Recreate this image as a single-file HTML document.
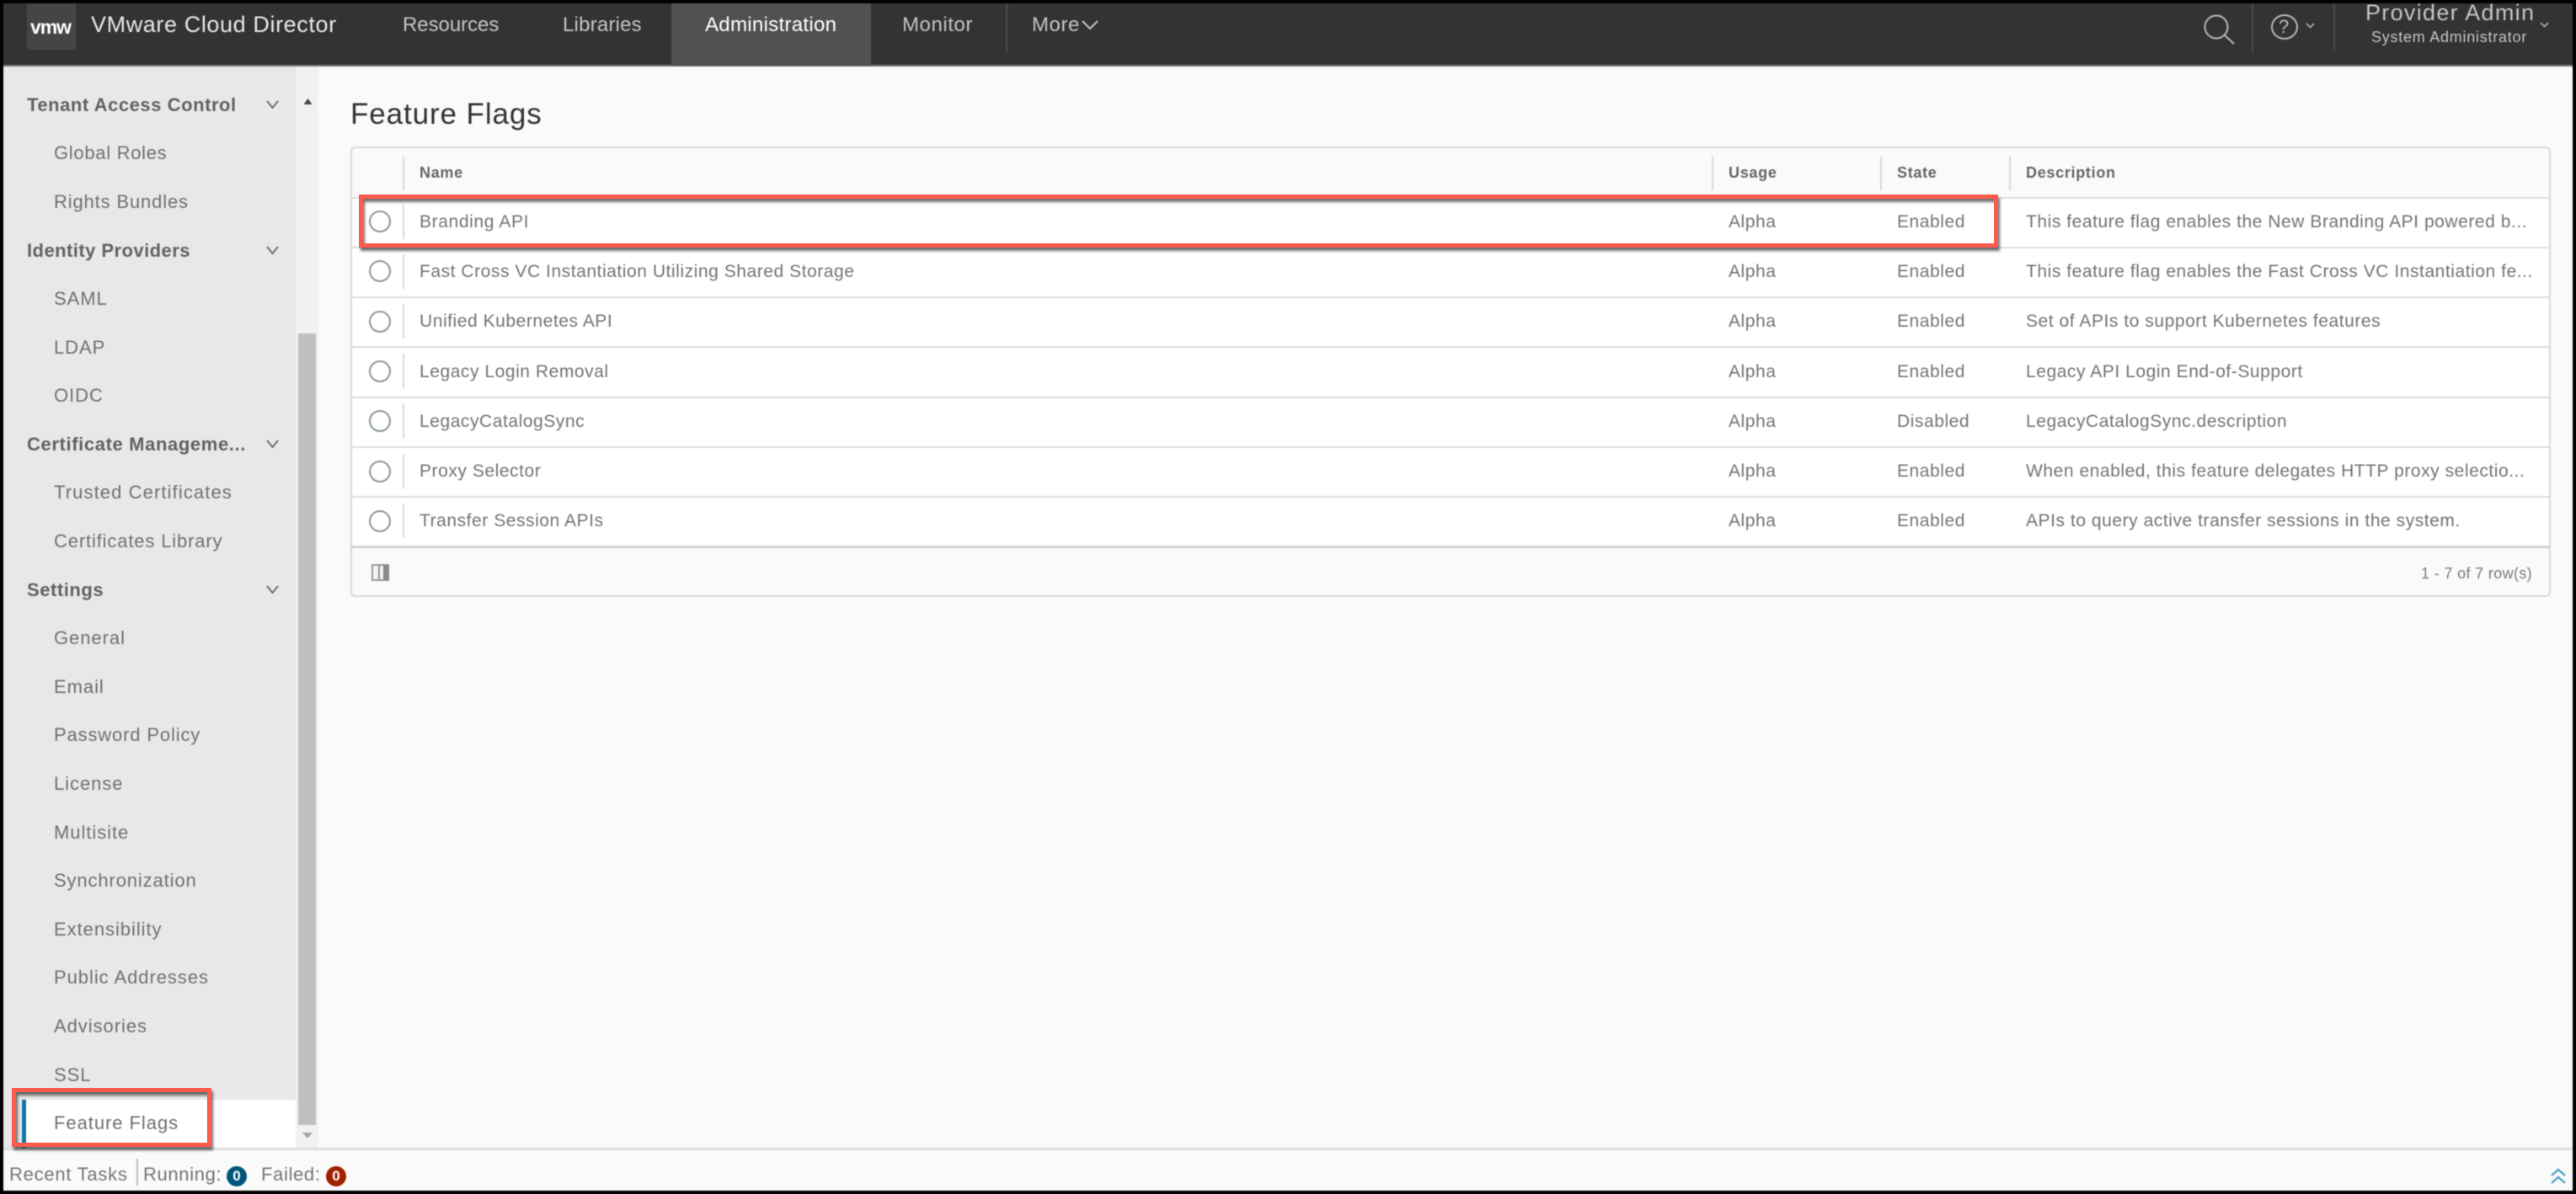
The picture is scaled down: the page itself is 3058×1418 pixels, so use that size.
<!DOCTYPE html>
<html lang="en"><head><meta charset="utf-8"><title>Feature Flags</title>
<style>
html,body{margin:0;padding:0;background:#000;width:3058px;height:1418px;overflow:hidden}
#f{position:absolute;left:4px;top:4px;width:3050px;height:1410px;overflow:hidden;background:#fafafa}
#w{position:absolute;left:0;top:0;width:3058px;height:1418px;font-family:"Liberation Sans",sans-serif;filter:blur(.45px)}
.b{position:absolute}
.t{position:absolute;white-space:nowrap;line-height:40px;height:40px}
.h{color:#c4c4c4;font-size:24px;letter-spacing:.4px}
.s{color:#707070;font-size:22px;letter-spacing:.95px}
.g{color:#626262;font-size:22px;font-weight:bold;letter-spacing:.55px}
.c{color:#747474;font-size:21px;letter-spacing:.55px}
.k{color:#666;font-size:18px;font-weight:bold;letter-spacing:.7px}
.l{position:absolute;background:#dcdcdc;height:2px;left:416px;width:2612px}
.d{position:absolute;background:#d8d8d8;width:2px}
.r{position:absolute;left:438px;width:22px;height:22px;border:2px solid #8b969b;border-radius:50%;background:#fff}
.red{position:absolute;border:5px solid #ff5a4e;box-sizing:border-box;box-shadow:2px 4px 3px rgba(0,0,0,.55),inset 2px 4px 3px rgba(0,0,0,.55)}
svg{position:absolute;overflow:visible}
</style></head><body>
<div id="w">
<div id="f"></div>
<!-- header -->
<div class="b" style="left:4px;top:4px;width:3050px;height:74px;background:#333"></div>
<div class="b" style="left:4px;top:77px;width:3050px;height:2px;background:#777"></div>
<div class="b" style="left:32px;top:4px;width:58px;height:55px;background:#454545;border-radius:0 0 4px 4px"></div>
<div class="t" style="left:36px;top:12px;color:#fff;font-size:23px;font-weight:bold;letter-spacing:-1.1px">vmw</div>
<div class="t" style="left:108px;top:9px;color:#e6e6e6;font-size:27px;letter-spacing:.6px">VMware Cloud Director</div>
<div class="t h" style="left:478px;top:10px;letter-spacing:-.05px">Resources</div>
<div class="t h" style="left:668px;top:10px;letter-spacing:.2px">Libraries</div>
<div class="b" style="left:797px;top:4px;width:237px;height:74px;background:#515151"></div>
<div class="t" style="left:837px;top:10px;color:#fff;font-size:24px;letter-spacing:.3px">Administration</div>
<div class="t h" style="left:1071px;top:10px;letter-spacing:.55px">Monitor</div>
<div class="t h" style="left:1225px;top:10px;letter-spacing:.55px">More</div>
<svg style="left:1283px;top:23px" width="22" height="14" fill="none" stroke="#c4c4c4" stroke-width="2"><path d="M2 2l9 9 9-9"/></svg>
<div class="b" style="left:1194px;top:4px;width:2px;height:58px;background:#4e4e4e"></div>
<svg style="left:2616px;top:17px" width="38" height="36" fill="none" stroke="#b8b8b8" stroke-width="2"><circle cx="15" cy="15" r="13.5"/><path d="M25 25l11 10"/></svg>
<div class="b" style="left:2673px;top:4px;width:2px;height:58px;background:#4a4a4a"></div>
<svg style="left:2696px;top:17px" width="34" height="30" fill="none" stroke="#b8b8b8" stroke-width="2"><ellipse cx="16" cy="15" rx="15" ry="14"/></svg>
<div class="t" style="left:2705px;top:12px;color:#b8b8b8;font-size:22px">?</div>
<svg style="left:2737px;top:27px" width="12" height="8" fill="none" stroke="#b0b0b0" stroke-width="1.6"><path d="M1 1l4.5 4.5L10 1"/></svg>
<div class="b" style="left:2770px;top:4px;width:2px;height:58px;background:#4a4a4a"></div>
<div class="t" style="left:2808px;top:-5px;color:#c4c4c4;font-size:27px;letter-spacing:1.3px">Provider Admin</div>
<div class="t" style="left:2815px;top:24px;color:#c4c4c4;font-size:18px;letter-spacing:.75px">System Administrator</div>
<svg style="left:3015px;top:26px" width="12" height="8" fill="none" stroke="#b0b0b0" stroke-width="1.6"><path d="M1 1l4.5 4.5L10 1"/></svg>

<!-- sidebar -->
<div class="b" style="left:4px;top:79px;width:347px;height:1284px;background:#e8e8e8"></div>
<div class="b" style="left:351px;top:79px;width:27px;height:1284px;background:#f1f1f1"></div>
<div class="b" style="left:354px;top:396px;width:21px;height:940px;background:#bfbfbf"></div>
<svg style="left:360px;top:117px" width="11" height="7"><path d="M5.5 0l5 7h-10z" fill="#444"/></svg>
<svg style="left:359px;top:1345px" width="12" height="7"><path d="M0 0h12L6 7z" fill="#a5a5a5"/></svg>
<div class="t g" style="left:32px;top:105px">Tenant Access Control</div>
<div class="t s" style="left:64px;top:162px;letter-spacing:.7px">Global Roles</div>
<div class="t s" style="left:64px;top:220px;letter-spacing:.85px">Rights Bundles</div>
<div class="t g" style="left:32px;top:278px;letter-spacing:.45px">Identity Providers</div>
<div class="t s" style="left:64px;top:335px">SAML</div>
<div class="t s" style="left:64px;top:393px">LDAP</div>
<div class="t s" style="left:64px;top:450px">OIDC</div>
<div class="t g" style="left:32px;top:508px;letter-spacing:.62px">Certificate Manageme...</div>
<div class="t s" style="left:64px;top:565px;letter-spacing:1.1px">Trusted Certificates</div>
<div class="t s" style="left:64px;top:623px;letter-spacing:.85px">Certificates Library</div>
<div class="t g" style="left:32px;top:681px">Settings</div>
<div class="t s" style="left:64px;top:738px">General</div>
<div class="t s" style="left:64px;top:796px">Email</div>
<div class="t s" style="left:64px;top:853px;letter-spacing:.85px">Password Policy</div>
<div class="t s" style="left:64px;top:911px">License</div>
<div class="t s" style="left:64px;top:969px">Multisite</div>
<div class="t s" style="left:64px;top:1026px;letter-spacing:.87px">Synchronization</div>
<div class="t s" style="left:64px;top:1084px">Extensibility</div>
<div class="t s" style="left:64px;top:1141px">Public Addresses</div>
<div class="t s" style="left:64px;top:1199px">Advisories</div>
<div class="t s" style="left:64px;top:1257px">SSL</div>
<div class="b" style="left:31px;top:1306px;width:320px;height:57px;background:#fff"></div>
<div class="b" style="left:26px;top:1306px;width:5px;height:57px;background:#0f75a8"></div>
<div class="t s" style="left:64px;top:1314px">Feature Flags</div>
<svg style="left:316px;top:119px" width="15" height="11" fill="none" stroke="#666" stroke-width="1.8"><path d="M1 1l6.5 8L14 1"/></svg>
<svg style="left:316px;top:292px" width="15" height="11" fill="none" stroke="#666" stroke-width="1.8"><path d="M1 1l6.5 8L14 1"/></svg>
<svg style="left:316px;top:522px" width="15" height="11" fill="none" stroke="#666" stroke-width="1.8"><path d="M1 1l6.5 8L14 1"/></svg>
<svg style="left:316px;top:695px" width="15" height="11" fill="none" stroke="#666" stroke-width="1.8"><path d="M1 1l6.5 8L14 1"/></svg>

<!-- content -->
<div class="t" style="left:416px;top:116px;color:#333;font-size:35px;letter-spacing:.9px">Feature Flags</div>
<div class="b" style="left:416px;top:174px;width:2612px;height:535px;box-sizing:border-box;border:2px solid #d8d8d8;border-radius:6px;background:#fafafa"></div>
<div class="b" style="left:418px;top:235px;width:2608px;height:414px;background:#fff"></div>
<div class="l" style="top:234px"></div><div class="l" style="top:293px"></div><div class="l" style="top:352px"></div><div class="l" style="top:411px"></div><div class="l" style="top:471px"></div><div class="l" style="top:530px"></div><div class="l" style="top:589px"></div>
<div class="l" style="top:648px;background:#cfcfcf;height:3px"></div>

<div class="d" style="left:478px;top:186px;height:40px"></div>
<div class="d" style="left:2032px;top:186px;height:40px"></div>
<div class="d" style="left:2232px;top:186px;height:40px"></div>
<div class="d" style="left:2385px;top:186px;height:40px"></div>
<div class="t k" style="left:498px;top:185px">Name</div>
<div class="t k" style="left:2052px;top:185px">Usage</div>
<div class="t k" style="left:2252px;top:185px">State</div>
<div class="t k" style="left:2405px;top:185px">Description</div>

<div class="d" style="left:478px;top:243px;height:41px"></div><div class="d" style="left:478px;top:302px;height:41px"></div><div class="d" style="left:478px;top:361px;height:41px"></div><div class="d" style="left:478px;top:420px;height:41px"></div><div class="d" style="left:478px;top:480px;height:41px"></div><div class="d" style="left:478px;top:539px;height:41px"></div><div class="d" style="left:478px;top:598px;height:41px"></div>
<div class="r" style="top:250px"></div><div class="r" style="top:309px"></div><div class="r" style="top:369px"></div><div class="r" style="top:428px"></div><div class="r" style="top:487px"></div><div class="r" style="top:547px"></div><div class="r" style="top:606px"></div>

<div class="t c" style="left:498px;top:244px;letter-spacing:.62px">Branding API</div><div class="t c" style="left:2052px;top:244px">Alpha</div><div class="t c" style="left:2252px;top:244px">Enabled</div><div class="t c" style="left:2405px;top:244px">This feature flag enables the New Branding API powered b...</div>
<div class="t c" style="left:498px;top:303px">Fast Cross VC Instantiation Utilizing Shared Storage</div><div class="t c" style="left:2052px;top:303px">Alpha</div><div class="t c" style="left:2252px;top:303px">Enabled</div><div class="t c" style="left:2405px;top:303px">This feature flag enables the Fast Cross VC Instantiation fe...</div>
<div class="t c" style="left:498px;top:362px">Unified Kubernetes API</div><div class="t c" style="left:2052px;top:362px">Alpha</div><div class="t c" style="left:2252px;top:362px">Enabled</div><div class="t c" style="left:2405px;top:362px">Set of APIs to support Kubernetes features</div>
<div class="t c" style="left:498px;top:422px">Legacy Login Removal</div><div class="t c" style="left:2052px;top:422px">Alpha</div><div class="t c" style="left:2252px;top:422px">Enabled</div><div class="t c" style="left:2405px;top:422px">Legacy API Login End-of-Support</div>
<div class="t c" style="left:498px;top:481px">LegacyCatalogSync</div><div class="t c" style="left:2052px;top:481px">Alpha</div><div class="t c" style="left:2252px;top:481px">Disabled</div><div class="t c" style="left:2405px;top:481px">LegacyCatalogSync.description</div>
<div class="t c" style="left:498px;top:540px">Proxy Selector</div><div class="t c" style="left:2052px;top:540px">Alpha</div><div class="t c" style="left:2252px;top:540px">Enabled</div><div class="t c" style="left:2405px;top:540px">When enabled, this feature delegates HTTP proxy selectio...</div>
<div class="t c" style="left:498px;top:599px">Transfer Session APIs</div><div class="t c" style="left:2052px;top:599px">Alpha</div><div class="t c" style="left:2252px;top:599px">Enabled</div><div class="t c" style="left:2405px;top:599px">APIs to query active transfer sessions in the system.</div>

<svg style="left:441px;top:670px" width="22" height="20"><rect x="1" y="1" width="19" height="18" fill="#f4f4f4" stroke="#999" stroke-width="2"/><rect x="14" y="1" width="7" height="18" fill="#8a8a8a"/><rect x="8" y="1" width="2" height="18" fill="#999"/></svg>
<div class="t" style="right:52px;top:661px;color:#7a7a7a;font-size:18px;letter-spacing:.35px">1 - 7 of 7 row(s)</div>

<!-- footer -->
<div class="b" style="left:4px;top:1363px;width:3050px;height:3px;background:#dedede"></div>
<div class="t" style="left:11px;top:1375px;color:#747474;font-size:22px;letter-spacing:.75px">Recent Tasks</div>
<div class="b" style="left:162px;top:1376px;width:2px;height:32px;background:#bbb"></div>
<div class="t" style="left:170px;top:1375px;color:#747474;font-size:22px;letter-spacing:.65px">Running:</div>
<div class="t" style="left:310px;top:1375px;color:#747474;font-size:22px;letter-spacing:.65px">Failed:</div>
<div class="b" style="left:269px;top:1385px;width:24px;height:24px;border-radius:50%;background:#00567a;color:#fff;font-size:17px;font-weight:bold;line-height:24px;text-align:center">0</div>
<div class="b" style="left:387px;top:1385px;width:24px;height:24px;border-radius:50%;background:#a02000;color:#fff;font-size:17px;font-weight:bold;line-height:24px;text-align:center">0</div>
<svg style="left:3028px;top:1387px" width="18" height="20" fill="none" stroke="#4e9fc6" stroke-width="2.2"><path d="M1 9l8-7 8 7M1 18l8-7 8 7"/></svg>
</div>
<!-- annotations -->
<div class="red" style="left:426px;top:231px;width:1946px;height:63px"></div>
<div class="red" style="left:14px;top:1292px;width:237px;height:70px"></div>
</body></html>
